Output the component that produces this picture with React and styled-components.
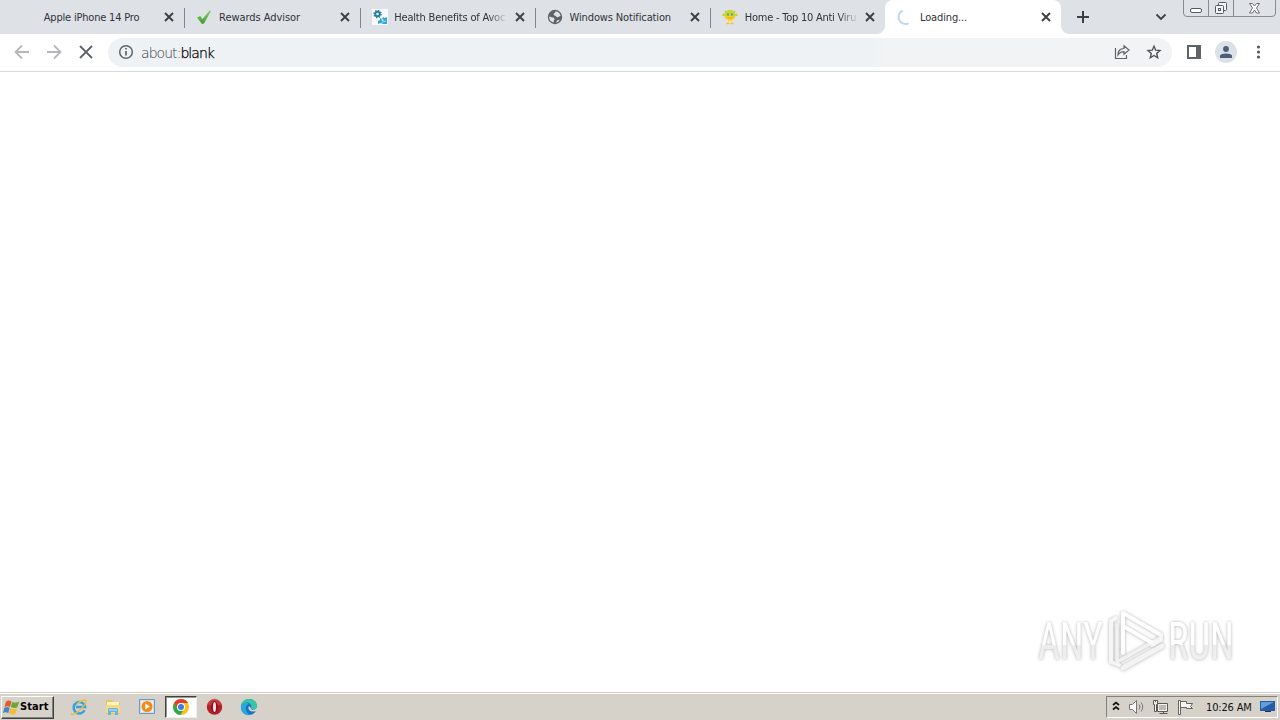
import React from 'react';
import styled, { createGlobalStyle } from 'styled-components';

const Global = createGlobalStyle`
  * { box-sizing: border-box; }
  body { margin: 0; background: #fff; overflow: hidden; }
  svg { display: block; flex: none; }
`;
const Screen = styled.div`
  width: 1280px; height: 720px; display: flex; flex-direction: column;
  position: relative; background: #fff; overflow: hidden;
  font-family: "DejaVu Sans Condensed", "DejaVu Sans", sans-serif; font-stretch: condensed;
`;
const TabStrip = styled.header`
  height: 34px; display: flex; background: #dee1e6; padding-left: 9px; flex: none;
`;
const Tab = styled.div`
  width: 175.25px; flex: none; height: 34px; display: flex; align-items: center;
  padding: 0 7px 0 12px; position: relative; color: #303338;
  background: ${p => (p.$active ? '#fff' : 'transparent')};
  border-radius: 8px 8px 0 0;
  &::after {
    content: ''; display: ${p => (p.$line ? 'block' : 'none')};
    position: absolute; right: -1px; top: 8px; width: 1px; height: 20px; background: #80848b;
  }
`;
const Curve = styled.i`
  position: absolute; bottom: 0; width: 8px; height: 8px;
  ${p => (p.$right ? 'right: -8px' : 'left: -8px')};
  background: radial-gradient(circle at ${p => (p.$right ? '100%' : '0')} 0, #dee1e6 7.5px, #fff 8.2px);
`;
const Favicon = styled.span`width: 16px; height: 16px; flex: none; display: block;`;
const Title = styled.span`
  margin-left: 6.8px; width: 114px; flex: none; font-size: 11px; line-height: 16px; padding-top: 1px;
  letter-spacing: ${p => p.$track || 0}px; white-space: nowrap;
  ${p => p.$fade && 'mask-image: linear-gradient(90deg, #000 82%, transparent 100%);'}
`;
const CloseBox = styled.span`margin-left: auto; width: 16px; padding: 3px;`;
const Actions = styled.div`
  display: flex; flex: 1; padding: 9px 0 0 14px; gap: 62px;
`;
const WindowControls = styled.div`
  position: absolute; right: 4px; top: -1px; width: 93px; height: 18px; display: flex;
  border: 1px solid #878b93; border-radius: 0 0 4px 4px; background: #dfe2e7;
`;
const WindowButton = styled.span`
  width: ${p => p.$w}px; display: flex; justify-content: center; align-items: center;
  border-right: ${p => (p.$last ? '0' : '1px solid #878b93')};
`;
const Toolbar = styled.div`
  height: 38px; flex: none; display: flex; align-items: center; padding: 0 12px 1px;
  border-bottom: 1px solid #d8dadc;
`;
const NavButtons = styled.nav`display: flex; gap: 12px; width: 96px; flex: none;`;
const AddressBar = styled.div`
  width: 1064px; height: 29px; border-radius: 15px; display: flex; align-items: center;
  padding: 0 8px; gap: 5px; background: linear-gradient(90deg, #eff2f5 0 72%, #f1f3f4 73%);
`;
const Address = styled.span`
  font: 200 14px/20px "DejaVu Sans", sans-serif; padding-top: 1px;
  letter-spacing: -0.95px; color: #3c4043; flex: 1;
  b { font-weight: inherit; color: #000; -webkit-text-stroke: 0.25px #000; }
`;
const ToolIcons = styled.div`display: flex; gap: 12px; ${p => p.$outer && 'margin-left: 12px;'}`;
const Avatar = styled.span`
  width: 22px; height: 22px; margin: -1px; border-radius: 50%; background: #dce1e7;
  display: flex; align-items: center; justify-content: center;
`;
const Page = styled.main`flex: 1; background: #fff;`;
const Taskbar = styled.footer`
  height: 28px; flex: none; display: flex; align-items: center; background: #d6d2ca;
  border-top: 1px solid #d2cec5; box-shadow: inset 0 1px #fff; padding: 1px 2px 0 1px;
`;
const StartButton = styled.button`
  width: 53px; height: 23px; display: flex; align-items: center; gap: 0; padding: 0 0 0 1px;
  background: #d6d2ca; border: 1px solid; border-color: #fff #404040 #404040 #fff;
  box-shadow: inset -1px -1px #85827c; color: #000;
  font: bold 11px/16px "DejaVu Sans Condensed", "DejaVu Sans", sans-serif;
  font-stretch: condensed; letter-spacing: 0.1px;
`;
const Launchers = styled.div`display: flex; margin-left: 9px; gap: 2px;`;
const Launcher = styled.span`
  width: 32px; height: 22px; display: flex; align-items: center; justify-content: center;
  ${p => p.$pressed && 'background: #fff; border: 1px solid; border-color: #404040 #eee #eee #404040; box-shadow: inset 1px 1px #99968f;'}
`;
const Tray = styled.div`
  margin-left: auto; width: 172px; height: 22px; border: 1px solid;
  border-color: #85827c #fff #fff #85827c; display: flex; align-items: center; padding: 0 1px 0 5px;
  font-size: 11px; color: #111;
`;
const TrayIcons = styled.div`display: flex; align-items: center; gap: 8px; width: 94px;`;
const Clock = styled.time`width: 53px; white-space: nowrap; letter-spacing: -0.15px;`;
const Watermark = styled.div`
  position: absolute; left: 1030px; top: 604px; width: 212px; height: 74px;
  filter: drop-shadow(0 0 1.5px rgba(0,0,0,.25)) drop-shadow(0 1px 2px rgba(0,0,0,.07));
`;

const Cross = ({ size = 10, width = 1.9, color = '#3c4043' }) => (
  <svg width={size} height={size} viewBox="0 0 10 10"><path d="M1 1l8 8M9 1L1 9" stroke={color} strokeWidth={width} /></svg>
);
const Arrow = ({ flip }) => (
  <svg width="20" height="20" viewBox="0 0 20 20" fill="none" stroke="#b5b7ba" strokeWidth="1.8">
    <path transform={flip ? 'translate(20 0) scale(-1 1)' : undefined} d="M17 10H4M10 3.500L3.500 10l6.500 6.500" />
  </svg>
);
const Check = () => (
  <svg width="16" height="16" viewBox="0 0 16 16">
    <defs><linearGradient id="leaf" x2="0" y2="1"><stop stopColor="#8bd36c" /><stop offset="1" stopColor="#3f9a35" /></linearGradient></defs>
    <path d="M1 8.500l3.300-1.500 2.200 3L13.500 1.500 15 2 8 14.500l-2 .5z" fill="url(#leaf)" />
  </svg>
);
const Gears = () => (
  <svg width="16" height="16" viewBox="0 0 16 16">
    <path fill="#f8fbfd" d="M0 0h16v16H0z" />
    <circle cx="5.500" cy="5" r="2.300" fill="none" stroke="#257d9d" strokeWidth="2" />
    <circle cx="5.500" cy="5" r="3.700" fill="none" stroke="#257d9d" strokeWidth="1.200" strokeDasharray="1.4 1.5" />
    <path d="M6 15v-3l2-1V9l2 1 1-2 2 1 2-1v7h-4l-2-1z" fill="#35a9d5" />
    <path d="M9 15q1-3 5-3" stroke="#a6ddef" fill="none" />
    <circle cx="10.500" cy="11" r="1" fill="#d9f1f8" />
  </svg>
);
const Globe = () => (
  <svg width="16" height="16" viewBox="0 0 16 16">
    <circle cx="8" cy="8" r="7.200" fill="#5f6368" />
    <path d="M2.300 7.500c2 .4 2.400 1 4 1 1 .2 1.500 1.500 1 2.300l-1 2.700c-3-.8-4.500-3.200-4-6zM8.500 2.200c2.600.2 4.500 1.900 5.100 4.500-1 .9-1.800.4-2.200 1.300-.8.7-2 0-2.400-.8-.5-1-2-.4-2.400-1.400C6.300 4.500 8.400 4 8.500 2.200zM9.300 13.600l.6-2.100 2.800-.8c-.7 1.600-1.800 2.500-3.400 2.900z" fill="#dee1e6" />
  </svg>
);
const Robot = () => (
  <svg width="16" height="16" viewBox="0 0 16 16">
    <path d="M3 6L1 5M13 6l2-1M4 3.500L3 2M12 3.500L13 2" stroke="#b6c833" strokeWidth="1.400" />
    <path d="M2.500 7C2.500 2.500 5 1 8 1s5.500 1.500 5.500 6l-2 2h-7z" fill="#c7d633" />
    <path d="M0 6.500l3-.5M16 6.500L13 6M3 9l2-1M13 9l-2-1" stroke="#e7ca36" strokeWidth="1.500" />
    <path d="M4.500 7.500h7V11h-2v4h-3v-4h-2z" fill="#ffd21d" />
    <path d="M5 4.500h2v2H5zM9 4.500h2v2H9z" fill="#4caa78" />
    <path d="M5.500 8.500q2.500 2 5 0" fill="none" stroke="#e9953d" />
    <path d="M7 12h2v2H7z" fill="#f8e8a0" />
    <path d="M4.500 14.500h2M9.500 14.500h2" stroke="#f5b83a" strokeWidth="1.500" />
  </svg>
);
const Spinner = () => (
  <svg width="16" height="16" viewBox="0 0 16 16"><path d="M6.200 1.300A7 7 0 0 0 11.200 14.600" transform="rotate(-5 8 8)" fill="none" stroke="#bdd7f7" strokeWidth="2" /></svg>
);

const tabs = [
  { title: 'Apple iPhone 14 Pro', track: -0.2, line: true },
  { title: 'Rewards Advisor', track: -0.05, icon: <Check />, line: true },
  { title: 'Health Benefits of Avoc', track: -0.2, icon: <Gears />, line: true, fade: true },
  { title: 'Windows Notification', track: -0.13, icon: <Globe />, line: true },
  { title: 'Home - Top 10 Anti Viru', track: -0.24, icon: <Robot />, fade: true },
  { title: 'Loading...', track: -0.15, icon: <Spinner />, active: true },
];

const IE = () => (
  <svg width="18" height="18" viewBox="0 0 18 18" fill="none">
    <path d="M14.500 12.200A5.700 5.700 0 1 1 15 9H6" stroke="#3ba0e0" strokeWidth="2.600" />
    <path d="M2 15C0 18 5 16.500 10 12S17.500 2.500 15 2c-2-.3-5 1.500-8 4" stroke="#e7be43" strokeWidth="1.400" />
  </svg>
);
const Folder = () => (
  <svg width="18" height="18" viewBox="0 0 18 18">
    <path d="M2 2h6l1 2h7v12H2z" fill="#e3c562" /><path d="M3 4h12v6H3z" fill="#fff3b5" />
    <path d="M2 7h14v8H2z" fill="#f1da8b" /><path d="M4 17v-6l1-1h8l1 1v6h-3v-3H7v3z" fill="#6bb4dc" /><path d="M5 12h8" stroke="#c8e9f8" />
  </svg>
);
const Media = () => (
  <svg width="18" height="18" viewBox="0 0 18 18">
    <path d="M1.500 1.500h15v14h-15z" fill="#c7e0f5" stroke="#6a99c6" /><path d="M3 3h12v11H3z" fill="#f6eee1" />
    <circle cx="9" cy="8.500" r="5.500" fill="#f38b16" /><path d="M7.300 5.500l4.500 3-4.500 3z" fill="#fff" />
  </svg>
);
const Chrome = () => (
  <svg width="18" height="18" viewBox="0 0 18 18">
    <circle cx="9" cy="9" r="8" fill="#fbc116" />
    <path d="M2.100 5A8 8 0 0 1 16 5H9a4 4 0 0 0-3.500 6z" fill="#e33b2e" />
    <path d="M2.100 5A8 8 0 0 0 8.500 17l3.500-6a4 4 0 0 1-6.500 0z" fill="#2da94f" />
    <circle cx="9" cy="9" r="4" fill="#fff" /><circle cx="9" cy="9" r="3" fill="#3d7de0" />
  </svg>
);
const Opera = () => (
  <svg width="18" height="18" viewBox="0 0 18 18"><circle cx="8.500" cy="9" r="7.700" fill="#b51f27" /><path d="M2 7a6.500 6.500 0 0 1 13 0" fill="#d95558" opacity=".5" /><ellipse cx="8.500" cy="9" rx="3.300" ry="6" fill="#8e1119" /><ellipse cx="8.500" cy="9" rx="1.500" ry="5" fill="#f5e5e0" /></svg>
);
const Edge = () => (
  <svg width="18" height="18" viewBox="0 0 18 18">
    <circle cx="9" cy="9" r="8" fill="#1673c5" />
    <path d="M1 8C2 3 5 1 9 1c5 0 8 3 8 7 0 3-3 4-5 3-2-1 0-2-1-4C9 3 4 4 1 8z" fill="#36c7a5" />
    <path d="M1 8c2-4 6-4 8-2-5 1-4 8 1 11C4 18 0 13 1 8z" fill="#29a7de" />
    <path d="M9 8c-2 3 1 7 7 5l1-1v-3c-1 3-6 4-6 1z" fill="#d6d2ca" />
  </svg>
);
const Flag = () => (
  <svg width="17" height="17" viewBox="0 0 17 17">
    <path d="M3 2.500c2-1.500 4-1 5.500 0L7 8C5 6.800 3.500 7 1.500 8z" fill="#e65b27" /><path d="M9.300 3c2 1 4 1 7-.5L14.500 8c-2 1.200-4 1.200-6.700 0z" fill="#65ab35" />
    <path d="M1.200 9c2-1.200 4-1.200 5.500 0l-1.500 5.300C4 13 2 13 0 14z" fill="#4386cc" /><path d="M7.500 9.200c2 1.200 4 1.200 6.700 0l-1.700 5.500c-2 1.200-4 1-6.500-.3z" fill="#f4be2f" />
  </svg>
);

const LogoText = ({ x, width, children }) => (
  <text x={x} y="55" textLength={width} lengthAdjust="spacingAndGlyphs" fontFamily="Roboto, sans-serif" fontSize="51" fontWeight="400" fill="url(#silver)">{children}</text>
);
const Logo = styled.svg`overflow: visible;`;

export default function App() {
  return (
    <Screen>
      <Global />
      <TabStrip>
        {tabs.map(t => (
          <Tab key={t.title} $active={t.active} $line={t.line}>
            {t.active && <><Curve /><Curve $right /></>}
            <Favicon>{t.icon}</Favicon>
            <Title $track={t.track} $fade={t.fade}>{t.title}</Title>
            <CloseBox><Cross /></CloseBox>
          </Tab>
        ))}
        <Actions>
          <svg width="16" height="16" viewBox="0 0 16 16"><path d="M8 2v12M2 8h12" stroke="#3c4043" strokeWidth="2" /></svg>
          <svg width="16" height="16" viewBox="0 0 16 16"><path d="M3.500 5.500L8 10l4.500-4.500" fill="none" stroke="#3c4043" strokeWidth="1.800" /></svg>
        </Actions>
        <WindowControls>
          <WindowButton $w={25}><svg width="13" height="14" viewBox="0 0 13 14"><rect x=".5" y="7.500" width="11" height="4" rx="1.500" fill="#fff" stroke="#555a61" /></svg></WindowButton>
          <WindowButton $w={25}><svg width="14" height="14" viewBox="0 0 14 14" fill="#f4f5f6" stroke="#555a61"><rect x="4.500" y="1.500" width="8" height="8" rx="1" /><rect x="1.500" y="4.500" width="8" height="8" rx="1" /><rect x="4.500" y="7.500" width="2" height="2" /></svg></WindowButton>
          <WindowButton $w={41} $last><svg width="13" height="13" viewBox="0 0 13 13"><path d="M1.500 1.500h3l2 2.500 2-2.500h3L8.500 6l3 5h-3l-2-3-2 3h-3l3-5z" fill="#fff" stroke="#6a6f76" /></svg></WindowButton>
        </WindowControls>
      </TabStrip>
      <Toolbar>
        <NavButtons>
          <Arrow /><Arrow flip />
          <svg width="20" height="20" viewBox="0 0 20 20"><path d="M4 4l12 12M16 4L4 16" stroke="#5f6368" strokeWidth="1.800" /></svg>
        </NavButtons>
        <AddressBar>
          <svg width="20" height="20" viewBox="0 0 20 20"><circle cx="10" cy="10" r="6.300" fill="none" stroke="#5f6368" strokeWidth="1.500" /><path d="M10 9v4.500M10 6v1.600" stroke="#5f6368" strokeWidth="1.700" /></svg>
          <Address>about:<b>blank</b></Address>
          <ToolIcons>
            <svg width="20" height="20" viewBox="0 0 20 20" fill="none" stroke="#5f6368" strokeWidth="1.200"><path d="M3.500 6v10.500h11V13M6 13c0-4 2-6.500 6-6.500V3.800l5 4.200-5 4.200V9.700c-3 0-4.500 1-6 3.300z" /></svg>
            <svg width="20" height="20" viewBox="0 0 20 20"><path d="M10 4.300l1.700 3.900 4.300.4-3.300 2.900 1 4.300-3.700-2.300-3.700 2.300 1-4.300L4 8.600l4.300-.4z" fill="none" stroke="#505459" strokeWidth="1.400" /></svg>
          </ToolIcons>
        </AddressBar>
        <ToolIcons $outer>
          <svg width="20" height="20" viewBox="0 0 20 20"><path d="M3 3h14v14H3z" fill="#5f6368" /><path d="M5 5h7v10H5z" fill="#fff" /></svg>
          <Avatar><svg width="12" height="12" viewBox="0 0 12 12" fill="#4e5d78"><circle cx="6" cy="3" r="2.900" /><path d="M0 12V9.500c1-2.700 11-2.700 12 0V12z" /></svg></Avatar>
          <svg width="20" height="20" viewBox="0 0 20 20" fill="#55595e"><circle cx="10.500" cy="5" r="1.600" /><circle cx="10.500" cy="10" r="1.600" /><circle cx="10.500" cy="15" r="1.600" /></svg>
        </ToolIcons>
      </Toolbar>
      <Page />
      <Taskbar>
        <StartButton><Flag />Start</StartButton>
        <Launchers>
          <Launcher><IE /></Launcher><Launcher><Folder /></Launcher><Launcher><Media /></Launcher>
          <Launcher $pressed><Chrome /></Launcher><Launcher><Opera /></Launcher><Launcher><Edge /></Launcher>
        </Launchers>
        <Tray>
          <TrayIcons>
            <svg width="8" height="12" viewBox="0 0 8 12"><path d="M1 4l3-2.500L7 4M1 8.500L4 6l3 2.500" fill="none" stroke="#111" strokeWidth="1.700" /></svg>
            <svg width="17" height="16" viewBox="0 0 17 16" stroke="#77756f" fill="none"><path d="M1.500 5.500h3l4-4v13l-4-4h-3z" fill="#fff" /><path d="M11 5.500q2 2.500 0 5M13 3.500q3.500 4.500 0 9" /></svg>
            <svg width="16" height="17" viewBox="0 0 16 17" stroke="#5b5954" fill="#f3f2ef"><path d="M4.500 4.500h10v8h-10zM6.500 14.500h8M10.500 12v3" /><path d="M6 6h7v5H6z" fill="#bbb8b1" stroke="none" /><path d="M.5 1.500h4v4h-1v7h-2v-7h-1zM2.500 1v2" /></svg>
            <svg width="17" height="17" viewBox="0 0 17 17" stroke="#66635e" fill="#f7f7f5"><path d="M1.500 1.500h2v14h-2zM3.500 2.500h6v2h6l-2 3 2 2h-6v-1h-6z" /></svg>
          </TrayIcons>
          <Clock>10:26 AM</Clock>
          <svg width="16" height="16" viewBox="0 0 16 16"><path d="M1 2h15v10H1z" fill="#245ca7" /><path d="M2 3h13L2 10z" fill="#659ed7" /><path d="M6 12h6v1H6z" fill="#333" /></svg>
        </Tray>
      </Taskbar>
      <Watermark>
        <Logo width="212" height="74" viewBox="0 0 212 74">
          <defs><linearGradient id="silver" x1="0" y1="0" x2="0" y2="1"><stop offset=".55" stopColor="#fff" /><stop offset=".57" stopColor="#ececec" /><stop offset="1" stopColor="#f4f4f4" /></linearGradient></defs>
          <LogoText x="8" width="65">ANY</LogoText>
          <LogoText x="138" width="66">RUN</LogoText>
          <g fill="none" strokeWidth="4" strokeLinejoin="round" strokeLinecap="round">
            <path d="M86 14l-5 3v41l8 3" stroke="#f6f6f6" />
            <path d="M87 21v37l43-24" stroke="#f1f1f1" strokeWidth="3.500" />
            <path d="M93 64l39-22" stroke="#f3f3f3" strokeWidth="5" />
            <path d="M93 49V9l38 22M93 22l31 18" stroke="#fff" />
            <path d="M131 31v5l-9 5" stroke="#f6f6f6" />
          </g>
        </Logo>
      </Watermark>
    </Screen>
  );
}
